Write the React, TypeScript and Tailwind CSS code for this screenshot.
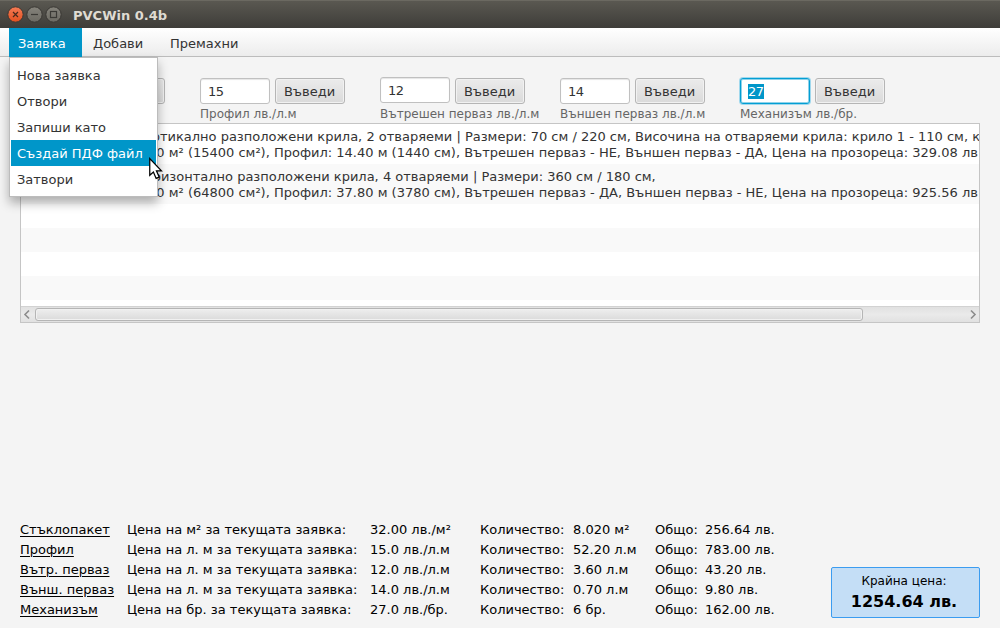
import React from "react";

const FONT = "font-['DejaVu_Sans',sans-serif]";

const fields = [
  { value: "32", label: "", up: false },
  { value: "15", label: "Профил лв./л.м", up: false },
  { value: "12", label: "Вътрешен перваз лв./л.м", up: true },
  { value: "14", label: "Външен перваз лв./л.м", up: false },
  { value: "27", label: "Механизъм лв./бр.", up: false, focused: true },
];

const menu = ["Нова заявка", "Отвори", "Запиши като", "Създай ПДФ файл", "Затвори"];

const totals = [
  ["Стъклопакет", "Цена на м² за текущата заявка:", "32.00 лв./м²", "8.020 м²", "256.64 лв."],
  ["Профил", "Цена на л. м за текущата заявка:", "15.0 лв./л.м", "52.20 л.м", "783.00 лв."],
  ["Вътр. перваз", "Цена на л. м за текущата заявка:", "12.0 лв./л.м", "3.60 л.м", "43.20 лв."],
  ["Външ. перваз", "Цена на л. м за текущата заявка:", "14.0 лв./л.м", "0.70 л.м", "9.80 лв."],
  ["Механизъм", "Цена на бр. за текущата заявка:", "27.0 лв./бр.", "6 бр.", "162.00 лв."],
];

function TitleBar() {
  return (
    <header className="flex h-7 shrink-0 items-center bg-linear-to-b from-[#5b5952] to-[#3e3d39] pl-[7px] shadow-[inset_0_1px_0_#6b6961]">
      <svg width="58" height="18" viewBox="0 0 58 18" className="mt-px">
        <defs>
          <linearGradient id="close" x1="0" y1="0" x2="0" y2="1">
            <stop offset="0" stopColor="#f47b55" />
            <stop offset="1" stopColor="#e2501f" />
          </linearGradient>
          <linearGradient id="grey" x1="0" y1="0" x2="0" y2="1">
            <stop offset="0" stopColor="#85837b" />
            <stop offset="1" stopColor="#6c6a63" />
          </linearGradient>
        </defs>
        <circle cx="8.5" cy="8.5" r="7.7" fill="url(#close)" stroke="#393733" />
        <circle cx="27.5" cy="8.5" r="7.7" fill="url(#grey)" stroke="#393733" />
        <circle cx="46.5" cy="8.5" r="7.7" fill="url(#grey)" stroke="#393733" />
        <path d="M6 6l5 5M11 6l-5 5" stroke="#47291c" strokeWidth="1.2" />
        <path d="M24 8.5h7" stroke="#3b3a36" strokeWidth="1.2" />
        <rect x="43.5" y="5.5" width="6" height="6" fill="none" stroke="#3b3a36" strokeWidth="1.2" />
      </svg>
      <span className="ml-2 mt-[3px] text-[13px] font-bold text-[#dfdbd2]">PVCWin 0.4b</span>
    </header>
  );
}

function Field({ value, label, up, focused }: { value: string; label: string; up?: boolean; focused?: boolean }) {
  return (
    <div className="w-[180px]">
      <div className="flex h-[26px] gap-[5px]">
        <div
          className={`flex h-[26px] w-[70px] items-center rounded-[3px] border bg-white pl-[7px] ${up ? "-mt-px" : ""} ${
            focused ? "border-[#039ed3] shadow-[0_0_0_1px_#a0d8ed,inset_0_0_0_1px_#8ed2ea]" : "border-[#c0c0c0] shadow-[inset_0_1px_1px_#e5e5e5]"
          }`}
        >
          <span className={focused ? "bg-[#0096c9] leading-[15px] tracking-[-0.5px] text-white" : "leading-[15px] tracking-[-0.5px]"}>{value}</span>
        </div>
        <button className="h-[26px] w-[70px] rounded-[3px] border border-[#b5b5b5] bg-linear-to-b from-[#ebebeb] to-[#dadada] pr-px pt-px shadow-[inset_0_0_0_1px_#f1f1f1]">
          Въведи
        </button>
      </div>
      <div className="mt-[3px] whitespace-nowrap text-[12px] leading-[14px] text-[#666]">{label}</div>
    </div>
  );
}

function Line({ lead, width, text }: { lead: string; width: string; text: string }) {
  return (
    <div className="flex h-4 whitespace-nowrap leading-4">
      <span className={`flex shrink-0 justify-end overflow-hidden whitespace-pre ${width}`}>{lead}</span>
      <span>{text}</span>
    </div>
  );
}

function OrderList() {
  return (
    <div className="mx-5 h-[200px] overflow-hidden border border-[#c5c5c5] bg-white">
      <div className="h-10 pt-[5px]">
        <Line lead="Прозорец: 2 " width="w-[115px]" text="вертикално разположени крила, 2 отваряеми | Размери: 70 см / 220 см, Височина на отваряеми крила: крило 1 - 110 см, крило 2 - 110 см" />
        <Line lead="Стъклопакет: " width="w-[106.4px]" text="1.540 м² (15400 см²), Профил: 14.40 м (1440 см), Вътрешен перваз - НЕ, Външен перваз - ДА, Цена на прозореца: 329.08 лв" />
      </div>
      <div className="h-10 bg-[#f9f9f9] pt-[5px]">
        <Line lead="Прозорец: 4 " width="w-[116px]" text="хоризонтално разположени крила, 4 отваряеми | Размери: 360 см / 180 см," />
        <Line lead="Стъклопакет: " width="w-[106.4px]" text="6.480 м² (64800 см²), Профил: 37.80 м (3780 см), Вътрешен перваз - ДА, Външен перваз - НЕ, Цена на прозореца: 925.56 лв" />
      </div>
      <div className="h-6" />
      <div className="h-6 bg-[#f9f9f9]" />
      <div className="h-6" />
      <div className="h-6 bg-[#f9f9f9]" />
      <div className="h-1.5" />
      <div className="flex h-4 items-center border-t border-[#d2d2d2] bg-linear-to-b from-[#e1e1e1] via-[#eaeaea] to-[#e1e1e1]">
        <svg width="14" height="15" viewBox="0 0 14 15" fill="none" stroke="#8c8c8c" strokeWidth="1.6">
          <path d="M8 3.5L4 7.5 8 11.5" />
        </svg>
        <div className="h-[13px] w-[828px] rounded-[3px] border border-[#b5b5b5] bg-linear-to-b from-[#eeeeee] to-[#dbdbdb] shadow-[inset_0_0_0_1px_#f1f1f1]" />
        <svg width="14" height="15" viewBox="0 0 14 15" fill="none" stroke="#8c8c8c" strokeWidth="1.6" className="ml-auto">
          <path d="M6 3.5L10 7.5 6 11.5" />
        </svg>
      </div>
    </div>
  );
}

function FileMenu() {
  return (
    <div className="absolute left-[9px] top-[57px] h-[140px] w-[149px] border border-[#bcbcbc] bg-white px-px pt-1 shadow-[0_6px_10px_rgba(0,0,0,0.3)]">
      {menu.map((m) => (
        <div key={m} className={`h-[26px] pl-1.5 leading-[28px] ${m === "Създай ПДФ файл" ? "bg-[#0096c9] text-white" : ""}`}>
          {m}
        </div>
      ))}
    </div>
  );
}

export default function App() {
  return (
    <div className={`relative flex h-[628px] w-[1000px] flex-col overflow-hidden bg-[#f4f4f4] text-[13px] text-[#333] ${FONT}`}>
      <TitleBar />
      <nav className="flex h-[29px] shrink-0 border-b border-[#bcbcbc] bg-linear-to-b from-white to-[#ececec] pl-[9px] leading-[32px]">
        <span className="h-[29px] w-[73px] bg-[#0096c9] pl-[9px] text-white">Заявка</span>
        <span className="w-[77px] pl-[11px]">Добави</span>
        <span className="pl-[11px]">Премахни</span>
      </nav>
      <div className="flex h-[66px] shrink-0 pl-5 pt-[21px]">
        {fields.map((f) => (
          <Field key={f.value} {...f} />
        ))}
      </div>
      <OrderList />
      <footer className="mt-auto flex items-end justify-between px-5 text-black">
        <div className="pb-2">
          {totals.map((r) => (
            <div key={r[0]} className="flex h-5 whitespace-nowrap leading-5">
              <span className="w-[107px] underline decoration-1 underline-offset-2">{r[0]}</span>
              <span className="w-[243px]">{r[1]}</span>
              <span className="w-[110px]">{r[2]}</span>
              <span className="w-[93px]">Количество:</span>
              <span className="w-[82px]">{r[3]}</span>
              <span className="w-[50px]">Общо:</span>
              <span>{r[4]}</span>
            </div>
          ))}
        </div>
        <div className="mb-2.5 flex h-[51px] w-[149px] flex-col items-center rounded-[2px] border border-[#3b9cf0] bg-[#c4def6] pr-[3px] pt-[5px]">
          <span className="text-[12px] leading-4">Крайна цена:</span>
          <span className="mt-[3px] text-[16px] font-bold leading-5">1254.64 лв.</span>
        </div>
      </footer>
      <FileMenu />
      <svg width="15" height="23" viewBox="0 0 14 22" className="absolute left-[148px] top-[157px]">
        <path d="M1.5 1.5V17.5L5 14.3L7.6 20.5L10.5 19.2L7.9 13.2H12.7Z" fill="white" stroke="black" strokeWidth="1.2" />
      </svg>
    </div>
  );
}
